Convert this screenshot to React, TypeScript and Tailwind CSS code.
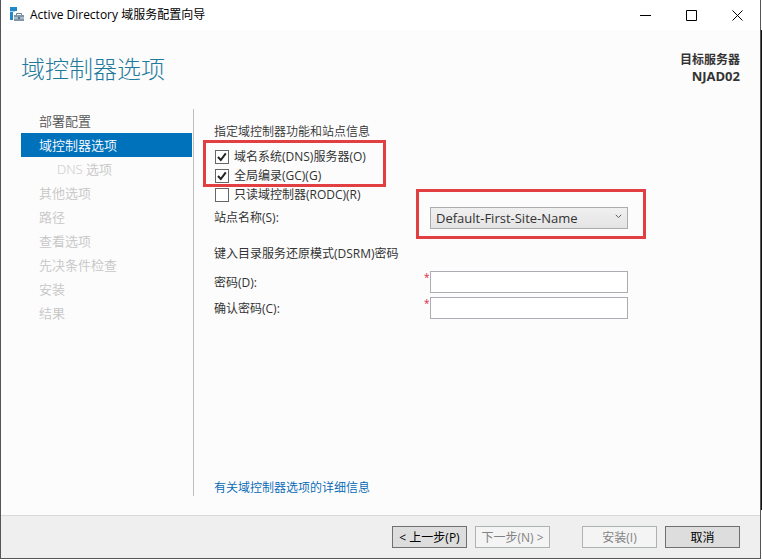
import type { InputHTMLAttributes } from 'react';

const steps = [
  { label: '部署配置', state: 'done' },
  { label: '域控制器选项', state: 'active' },
  { label: 'DNS 选项', state: 'child' },
  { label: '其他选项', state: 'todo' },
  { label: '路径', state: 'todo' },
  { label: '查看选项', state: 'todo' },
  { label: '先决条件检查', state: 'todo' },
  { label: '安装', state: 'todo' },
  { label: '结果', state: 'todo' },
] as const;

const stepStyle = {
  done: 'pl-[18px] text-[#555]',
  active: 'pl-[18px] bg-[#0072bc] text-white',
  child: 'pl-9 text-[#c6c6c6]',
  todo: 'pl-[18px] text-[#c6c6c6]',
};

function Check({ label, ...rest }: { label: string } & InputHTMLAttributes<HTMLInputElement>) {
  return (
    <label className="flex h-[19px] items-center gap-[5px] pl-px">
      <span className="relative flex size-[14px]">
        <input
          type="checkbox"
          className="peer size-[14px] appearance-none border border-[#666] bg-white"
          {...rest}
        />
        <svg
          viewBox="0 0 14 14"
          className="pointer-events-none absolute inset-0 hidden size-[14px] peer-checked:block"
          fill="none"
          stroke="#222"
          strokeWidth="2"
        >
          <path d="M3 7 L5.8 10 L10.8 3.4" />
        </svg>
      </span>
      {label}
    </label>
  );
}

function Password({ id, label }: { id: string; label: string }) {
  return (
    <div className="flex h-[22px] items-center">
      <label htmlFor={id} className="w-[210px] pt-px">
        {label}
      </label>
      <span className="w-[6px] self-start text-[10px] leading-3 text-[#e0243c]">*</span>
      <input
        id={id}
        type="password"
        className="h-[22px] w-[198px] border border-[#abadb3] bg-white px-1 outline-none"
      />
    </div>
  );
}

const buttonBase = 'h-[22px] w-[75px] border pt-px text-center leading-5';
const buttonOn = 'border-[#707070] bg-[#dddddd] text-black';
const buttonOff = 'border-[#adb2b5] bg-[#f4f4f4] text-[#838383]';

export default function App() {
  return (
    <div className="flex h-screen bg-white font-['Open_Sans','Noto_Sans_CJK_SC',sans-serif] text-[12px] leading-4 text-[#333]">
      <div className="flex h-[559px] flex-1 flex-col border-r border-b border-l border-[#555] bg-[#fcfcfc]">
        <header className="flex h-[30px] shrink-0 items-center bg-white pl-2 text-black">
          <svg viewBox="0 0 16 16" className="mr-[5px] size-4">
            <path d="M1 0h7v4H4v9H1z" fill="#2388c9" />
            <path d="M1 4h5v1H1z" fill="#a9d4ee" />
            <path d="M7.5 8.5V6.5h5v2" fill="none" stroke="#6d8291" />
            <path d="M5 8h10v6H5z" fill="#7f97a8" />
            <path d="M5 10.5h10v1H5z" fill="#d5e1e9" />
            <path d="M9 10h2v2H9z" fill="#5d7382" />
          </svg>
          <h1 className="flex-1">Active Directory 域服务配置向导</h1>
          <button aria-label="最小化" className="flex h-7 w-[46px] items-center justify-center">
            <svg viewBox="0 0 11 11" className="size-[11px]" stroke="#000" fill="none">
              <path d="M0 5.5h11" />
            </svg>
          </button>
          <button aria-label="最大化" className="flex h-7 w-[46px] items-center justify-center">
            <svg viewBox="0 0 11 11" className="size-[11px]" stroke="#000" fill="none">
              <path d="M.5.5h10v10H.5z" />
            </svg>
          </button>
          <button aria-label="关闭" className="flex h-7 w-[46px] items-center justify-center">
            <svg viewBox="0 0 11 11" className="size-[11px]" stroke="#000" fill="none">
              <path d="M.5.5l10 10M10.5.5l-10 10" />
            </svg>
          </button>
        </header>

        <div className="flex h-[79px] shrink-0 justify-between pr-5 pl-5">
          <h2 className="pt-[23px] text-[24px] leading-8 font-light text-[#1f7a9c]">域控制器选项</h2>
          <div className="pt-[22px] text-right font-bold">
            <p>目标服务器</p>
            <p className="text-[13px] leading-4">NJAD02</p>
          </div>
        </div>

        <div className="flex flex-1 pb-[19px] pl-5">
          <nav className="w-[173px] border-r border-[#c0c0c0] pr-px font-[350]">
            <ul>
              {steps.map((s) => (
                <li key={s.label} className={`h-6 text-[13px] leading-6 ${stepStyle[s.state]}`}>
                  {s.label}
                </li>
              ))}
            </ul>
          </nav>
          <main className="flex flex-1 flex-col pt-[15px] pl-5">
            <p className="font-[350]">指定域控制器功能和站点信息</p>
            <div className="relative mt-[7px] flex flex-col">
              <Check label="域名系统(DNS)服务器(O)" defaultChecked />
              <Check label="全局编录(GC)(G)" defaultChecked />
              <Check label="只读域控制器(RODC)(R)" />
              <div className="pointer-events-none absolute -top-[7px] -left-[11px] h-[47px] w-[183px] border-[3px] border-[#e23f42]" />
            </div>
            <div className="mt-[3px] flex h-[22px] items-center">
              <label htmlFor="site" className="w-[216px]">
                站点名称(S):
              </label>
              <div className="relative">
                <select
                  id="site"
                  className="block h-[22px] w-[198px] appearance-none border border-[#acacac] bg-linear-to-b from-[#f0f0f0] to-[#e4e4e4] px-[5px] text-[13px] leading-5"
                >
                  <option>Default-First-Site-Name</option>
                </select>
                <svg
                  viewBox="0 0 7 5"
                  className="pointer-events-none absolute top-[7px] right-[6px] h-[5px] w-[7px]"
                  fill="none"
                  stroke="#606060"
                >
                  <path d="M.8.8l2.7 2.8L6.2.8" />
                </svg>
                <div className="pointer-events-none absolute -top-[18px] -left-[14px] h-[50px] w-[230px] border-[3px] border-[#e23f42]" />
              </div>
            </div>
            <p className="mt-[17px]">键入目录服务还原模式(DSRM)密码</p>
            <div className="mt-[9px] flex flex-col gap-1">
              <Password id="password" label="密码(D):" />
              <Password id="confirm" label="确认密码(C):" />
            </div>
            <a href="#details" className="mt-auto self-start font-[350] text-[#0066b4]">
              有关域控制器选项的详细信息
            </a>
          </main>
        </div>

        <footer className="flex h-[43px] shrink-0 items-center justify-end border-t border-[#d8d8d8] bg-[#efefef] pr-5">
          <button className={`${buttonBase} ${buttonOn}`}>&lt; 上一步(P)</button>
          <button disabled className={`ml-2 ${buttonBase} ${buttonOff}`}>
            下一步(N) &gt;
          </button>
          <button disabled className={`ml-8 ${buttonBase} ${buttonOff}`}>
            安装(I)
          </button>
          <button className={`ml-2 ${buttonBase} ${buttonOn}`}>取消</button>
        </footer>
      </div>
      <div className="mt-[30px] h-[480px] w-px bg-[#111]" />
    </div>
  );
}
